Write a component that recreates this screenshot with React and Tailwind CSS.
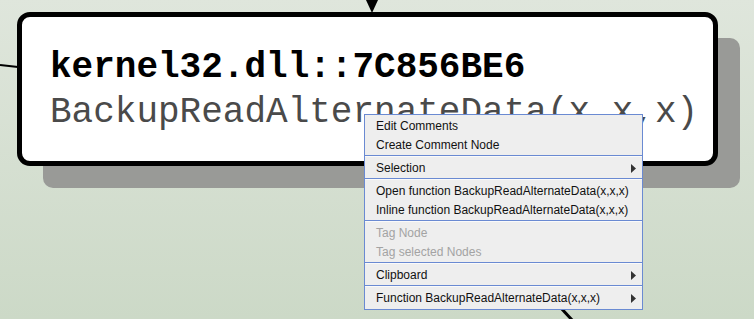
import React from "react";

const Arrow = () => (
  <svg width="5" height="9" viewBox="0 0 5 9" className="shrink-0">
    <polygon points="0,0 5,4.5 0,9" fill="#333" />
  </svg>
);

function Item({ label, disabled, sub }) {
  return (
    <div
      className={`h-[19px] flex items-center pl-[11px] pr-[6px] pt-px text-[12px] leading-[18px] ${
        disabled ? "text-[#a3a3a3]" : "text-[#111]"
      }`}
    >
      <span className="flex-1 whitespace-nowrap">{label}</span>
      {sub && <Arrow />}
    </div>
  );
}

const Sep = () => (
  <div className="flex flex-col py-px">
    <div className="h-px bg-[#6a8ad2]" />
    <div className="h-px bg-[#fafafa]" />
  </div>
);

export default function App() {
  return (
    <div className="relative w-[754px] h-[319px] overflow-hidden bg-gradient-to-b from-[#dfe6dc] to-[#ccd9c7] font-['Liberation_Sans',Arial,sans-serif]">
      {/* edges */}
      <svg className="absolute inset-0" width="754" height="319">
        <line x1="0" y1="65" x2="18" y2="67" stroke="#000" strokeWidth="2" />
        <line x1="372" y1="0" x2="372" y2="10" stroke="#000" strokeWidth="2" />
        <polygon points="366,0 378,0 372,13" fill="#000" />
        <line x1="560" y1="307" x2="573" y2="321" stroke="#000" strokeWidth="3" />
      </svg>

      {/* shadow */}
      <div className="absolute left-[43px] top-[38px] w-[697px] h-[150px] rounded-[10px] bg-[#999a97]" />

      {/* node */}
      <div className="absolute left-[17px] top-[12px] w-[701px] h-[154px] rounded-[13px] border-[5px] border-black bg-white pl-[28px] pt-[28px] font-['Liberation_Mono','Courier_New',monospace] text-[36px] leading-[45px] whitespace-nowrap">
        <div className="font-bold text-black">kernel32.dll::7C856BE6</div>
        <div className="text-[#4a4a4a]">BackupReadAlternateData(x,x,x)</div>
      </div>

      {/* context menu */}
      <div className="absolute left-[364px] top-[114px] w-[279px] border border-[#6a8ad2] bg-[#eeeeee] pt-px pb-[2px] flex flex-col">
        <Item label="Edit Comments" />
        <Item label="Create Comment Node" />
        <Sep />
        <Item label="Selection" sub />
        <Sep />
        <Item label="Open function BackupReadAlternateData(x,x,x)" />
        <Item label="Inline function BackupReadAlternateData(x,x,x)" />
        <Sep />
        <Item label="Tag Node" disabled />
        <Item label="Tag selected Nodes" disabled />
        <Sep />
        <Item label="Clipboard" sub />
        <Sep />
        <Item label="Function BackupReadAlternateData(x,x,x)" sub />
      </div>
    </div>
  );
}
